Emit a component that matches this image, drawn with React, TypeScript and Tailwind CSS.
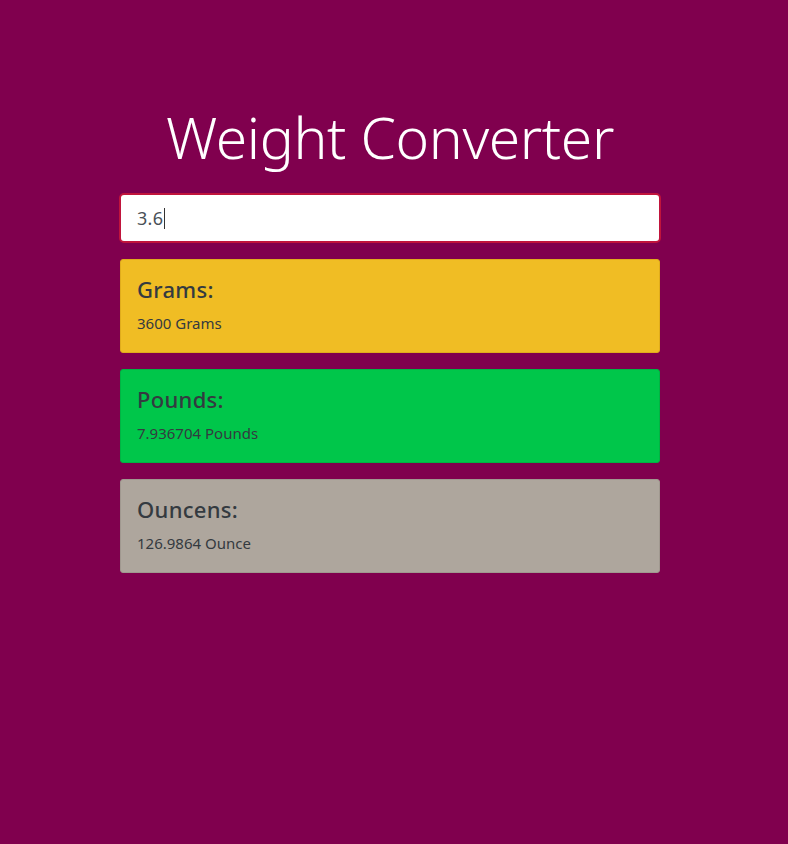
import React from "react";

const cards = [
  { title: "Grams:", value: "3600 Grams", bg: "bg-[#f0bd24]", border: "border-[#e0ac1c]" },
  { title: "Pounds:", value: "7.936704 Pounds", bg: "bg-[#00c64a]", border: "border-[#00b443]" },
  { title: "Ouncens:", value: "126.9864 Ounce", bg: "bg-[#aea69d]", border: "border-[#a0988f]" },
];

export default function App() {
  return (
    <div
      className="min-h-[844px] w-full bg-[#80004e] text-[#343a40]"
      style={{ fontFamily: "'Noto Sans', 'Open Sans', sans-serif" }}
    >
      <div className="ml-[119px] w-[542px] pt-[101px]">
        <h1 className="text-center text-[57px] leading-[72px] font-light text-white tracking-[-0.4px]">
          Weight Converter
        </h1>
        <div className="mt-[20px] h-[50px] rounded-[5px] border-2 border-[#c0143c] bg-white pl-[16px] flex items-center">
          <span className="mt-[1px] text-[18px] text-[#495057] tracking-[0.3px]">3.6</span>
          <span className="ml-[1px] h-[21px] w-[1px] bg-[#333]" />
        </div>
        <div className="mx-[1px] mt-[16px] flex flex-col gap-[16px]">
          {cards.map((c) => (
            <div
              key={c.title}
              className={`h-[94px] rounded-[3px] border ${c.bg} ${c.border} px-[16px] pt-[14px]`}
            >
              <div className="text-[22px] leading-[30px] font-medium tracking-[0.3px]">{c.title}</div>
              <div className="mt-[9px] text-[15px] leading-[20px]">{c.value}</div>
            </div>
          ))}
        </div>
      </div>
    </div>
  );
}
